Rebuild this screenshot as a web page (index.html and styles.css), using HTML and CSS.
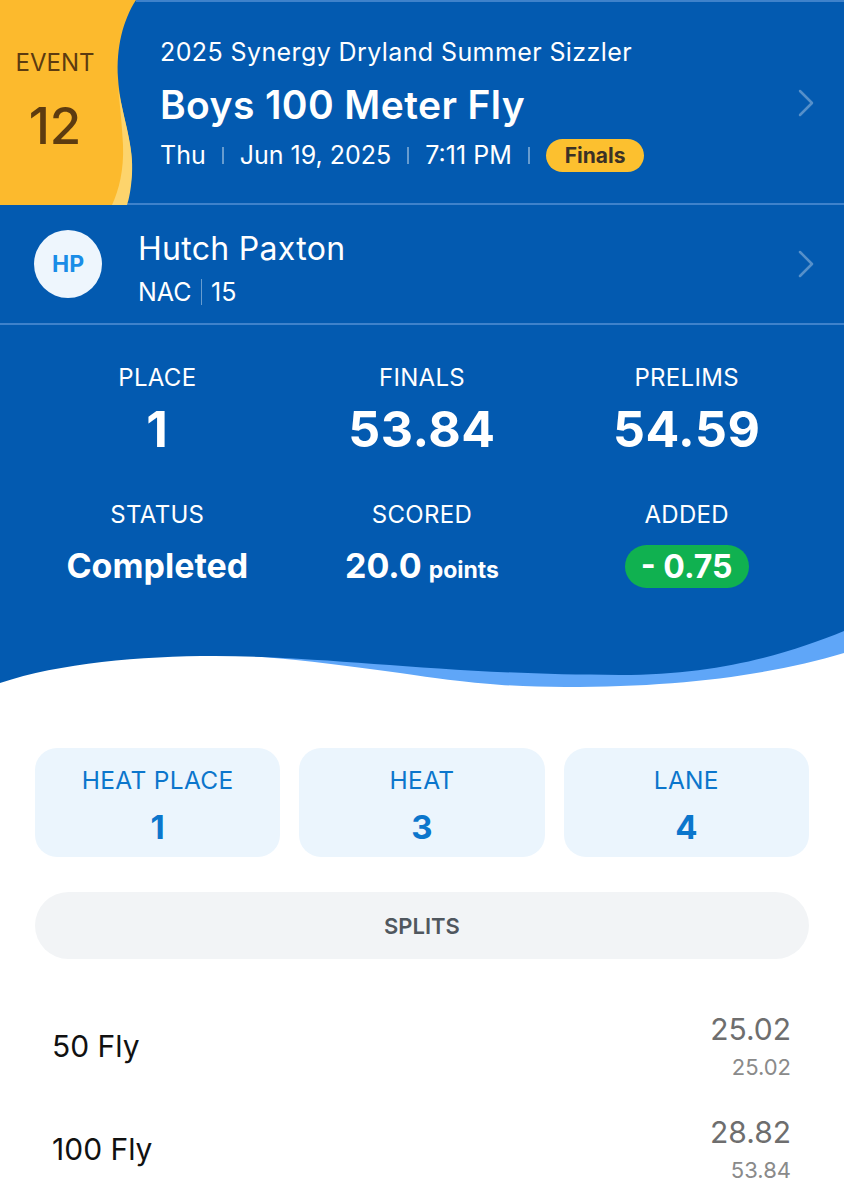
FILE: index.html
```html
<!DOCTYPE html>
<html lang="en">

<head>

    <meta charset="UTF-8">
    <meta name="viewport" content="width=device-width, initial-scale=1.0">
    <title>Boys 100 Meter Fly</title>

    <link rel="stylesheet" href="styles.css">

</head>

<body>

    <div class="hero">

        <header class="event">
            <div class="event-badge">
                <svg class="badge-shape" viewBox="0 0 136 205" preserveAspectRatio="none">
                    <path d="M0,0 H136 C123,20 116,48 118,78 C120,112 133,140 132,170 C131,188 128,198 126,205 H0 Z" fill="#fcba2d" />
                    <path d="M118,88 C124,120 134,148 132,174 C131,190 129,199 127,205 H112 C119,190 124,170 123,145 C122,125 120,105 118,88 Z" fill="#fdd46c" />
                </svg>
                <span class="badge-label">EVENT</span>
                <span class="badge-number">12</span>
            </div>
            <div class="event-main">
                <div class="event-info">
                    <div class="meet-name">2025 Synergy Dryland Summer Sizzler</div>
                    <div class="event-name">Boys 100 Meter Fly</div>
                    <div class="event-meta">
                        <span>Thu</span>
                        <i class="sep"></i>
                        <span>Jun 19, 2025</span>
                        <i class="sep"></i>
                        <span>7:11 PM</span>
                        <i class="sep"></i>
                        <span class="round-pill">Finals</span>
                    </div>
                </div>
                <svg class="chevron" viewBox="0 0 16 28"><polyline points="2,2 14,14 2,26" /></svg>
            </div>
        </header>

        <div class="athlete">
            <div class="avatar">HP</div>
            <div class="athlete-info">
                <div class="athlete-name">Hutch Paxton</div>
                <div class="athlete-meta">
                    <span>NAC</span>
                    <i class="sep thin"></i>
                    <span>15</span>
                </div>
            </div>
            <svg class="chevron" viewBox="0 0 16 28"><polyline points="2,2 14,14 2,26" /></svg>
        </div>

        <div class="stats">
            <div class="stat">
                <div class="stat-label">PLACE</div>
                <div class="stat-value big">1</div>
            </div>
            <div class="stat">
                <div class="stat-label">FINALS</div>
                <div class="stat-value big">53.84</div>
            </div>
            <div class="stat">
                <div class="stat-label">PRELIMS</div>
                <div class="stat-value big">54.59</div>
            </div>
            <div class="stat">
                <div class="stat-label">STATUS</div>
                <div class="stat-value">Completed</div>
            </div>
            <div class="stat">
                <div class="stat-label">SCORED</div>
                <div class="stat-value">20.0<small>points</small></div>
            </div>
            <div class="stat">
                <div class="stat-label">ADDED</div>
                <div class="stat-value pill-value"><span class="added-pill">- 0.75</span></div>
            </div>
        </div>

    </div>

    <svg class="wave" viewBox="0 0 844 70" preserveAspectRatio="none">
        <path d="M150,0 V28 C250,30 330,40 400,50 C480,62 520,64 565,64 C680,64 770,52 844,30 V0 Z" fill="#5fa6f8" />
        <path d="M0,60 C60,40 140,33 215,33 C330,33 450,52 620,52 C720,52 790,30 844,8 V0 H0 Z" fill="#035ab0" />
    </svg>

    <main class="details">

        <div class="cards">
            <div class="card">
                <div class="card-label">HEAT PLACE</div>
                <div class="card-value">1</div>
            </div>
            <div class="card">
                <div class="card-label">HEAT</div>
                <div class="card-value">3</div>
            </div>
            <div class="card">
                <div class="card-label">LANE</div>
                <div class="card-value">4</div>
            </div>
        </div>

        <div class="splits-bar">SPLITS</div>

        <div class="splits">
            <div class="split">
                <span class="split-name">50 Fly</span>
                <div class="split-times">
                    <span class="split-time">25.02</span>
                    <span class="split-total">25.02</span>
                </div>
            </div>
            <div class="split">
                <span class="split-name">100 Fly</span>
                <div class="split-times">
                    <span class="split-time">28.82</span>
                    <span class="split-total">53.84</span>
                </div>
            </div>
        </div>

    </main>

</body>

</html>
```

FILE: styles.css
```css
html,
body {
    margin: 0px;
    background-color: #fff;
}

body {
    width: 844px;
    font-family: Inter, "Liberation Sans", sans-serif;
    color: #111;
    overflow: hidden;
}

:root {
    --blue: #035ab0;
    --line: #3f82cb;
    --chevron: rgba(255, 255, 255, 0.33);
}

.hero {
    background-color: var(--blue);
    color: #fff;
}

/* event header */

.event {
    display: flex;
    height: 203px;
    border-bottom: 2px solid var(--line);
}

.event-badge {
    position: relative;
    width: 136px;
    flex: none;
    padding-right: 26px;
    box-sizing: border-box;
    display: flex;
    flex-direction: column;
    align-items: center;
    justify-content: center;
    gap: 21px;
    color: #5c3b10;
}

.badge-shape {
    position: absolute;
    left: 0;
    top: 0;
    width: 136px;
    height: 205px;
}

.badge-label,
.badge-number {
    position: relative;
}

.badge-label {
    font-size: 24px;
    line-height: 28px;
}

.badge-number {
    font-size: 51px;
    line-height: 56px;
    font-weight: 500;
}

.event-main {
    flex: 1;
    display: flex;
    align-items: center;
    border-top: 2px solid var(--line);
    padding-left: 24px;
}

.event-info {
    flex: 1;
    display: flex;
    flex-direction: column;
    padding-top: 4px;
}

.meet-name {
    font-size: 25px;
    line-height: 30px;
    letter-spacing: 0.4px;
}

.event-name {
    font-size: 39px;
    line-height: 44px;
    font-weight: 600;
    letter-spacing: 0.4px;
    margin-top: 16px;
}

.event-meta {
    display: flex;
    align-items: center;
    gap: 16px;
    font-size: 25px;
    line-height: 34px;
    margin-top: 11px;
}

.sep {
    display: block;
    width: 2px;
    height: 17px;
    background-color: rgba(255, 255, 255, 0.4);
}

.sep.thin {
    width: 1.5px;
    height: 26px;
}

.round-pill {
    background-color: #fcc02f;
    color: #3b3126;
    font-weight: 700;
    font-size: 21px;
    line-height: 33px;
    padding: 0 19px;
    border-radius: 17px;
}

.chevron {
    width: 16px;
    height: 28px;
    flex: none;
    margin-right: 30px;
    fill: none;
    stroke: var(--chevron);
    stroke-width: 2.5;
    stroke-linecap: round;
    stroke-linejoin: round;
}

/* athlete */

.athlete {
    display: flex;
    align-items: center;
    height: 118px;
    border-bottom: 2px solid var(--line);
    padding-left: 34px;
}

.avatar {
    width: 68px;
    height: 68px;
    border-radius: 50%;
    background-color: #eef6fd;
    color: #1a8de7;
    font-weight: 700;
    font-size: 23px;
    display: flex;
    align-items: center;
    justify-content: center;
    flex: none;
}

.athlete-info {
    flex: 1;
    margin-left: 36px;
    padding-top: 10px;
}

.athlete-name {
    font-size: 32px;
    line-height: 36px;
    letter-spacing: 0.3px;
}

.athlete-meta {
    display: flex;
    align-items: center;
    gap: 9px;
    font-size: 25px;
    line-height: 30px;
    margin-top: 10px;
}

/* stats */

.stats {
    display: grid;
    grid-template-columns: repeat(3, 1fr);
    row-gap: 44px;
    padding: 39px 25px 25px;
}

.stat {
    display: flex;
    flex-direction: column;
    align-items: center;
    gap: 9px;
}

.stat-label {
    font-size: 24px;
    line-height: 28px;
    letter-spacing: 0.3px;
}

.stat-value {
    font-size: 34px;
    line-height: 56px;
    font-weight: 700;
    display: flex;
    align-items: baseline;
}

.stat-value.big {
    font-size: 50px;
    letter-spacing: 0.5px;
}

.stat-value.pill-value {
    align-items: center;
    height: 56px;
}

.stat-value small {
    font-size: 23px;
    margin-left: 7px;
}

.added-pill {
    background-color: #10b150;
    font-size: 32px;
    line-height: 43px;
    padding: 0 16px;
    border-radius: 22px;
}

.wave {
    display: block;
    width: 844px;
    height: 70px;
}

/* details */

.details {
    padding: 55px 35px 0;
}

.cards {
    display: grid;
    grid-template-columns: repeat(3, 1fr);
    gap: 19px;
}

.card {
    background-color: #ebf5fd;
    border-radius: 22px;
    padding: 18px 0 10px;
    display: flex;
    flex-direction: column;
    align-items: center;
    gap: 13px;
    color: #0b76cc;
}

.card-label {
    font-size: 24.5px;
    line-height: 28px;
    letter-spacing: 0.3px;
}

.card-value {
    font-size: 33px;
    line-height: 40px;
    font-weight: 700;
}

.splits-bar {
    margin-top: 35px;
    height: 67px;
    border-radius: 34px;
    background-color: #f2f4f6;
    color: #50575e;
    font-size: 22px;
    font-weight: 600;
    display: flex;
    align-items: center;
    justify-content: center;
}

.splits {
    margin-top: 35px;
    padding: 0 18px 0 17px;
}

.split {
    display: flex;
    align-items: center;
    justify-content: space-between;
    padding: 17px 0;
}

.split-name {
    font-size: 30px;
    color: #111;
}

.split-times {
    display: flex;
    flex-direction: column;
    align-items: flex-end;
    gap: 7px;
}

.split-time {
    font-size: 30px;
    line-height: 36px;
    color: #6e6e6e;
}

.split-total {
    font-size: 22px;
    line-height: 26px;
    color: #8a8a8a;
}
```
